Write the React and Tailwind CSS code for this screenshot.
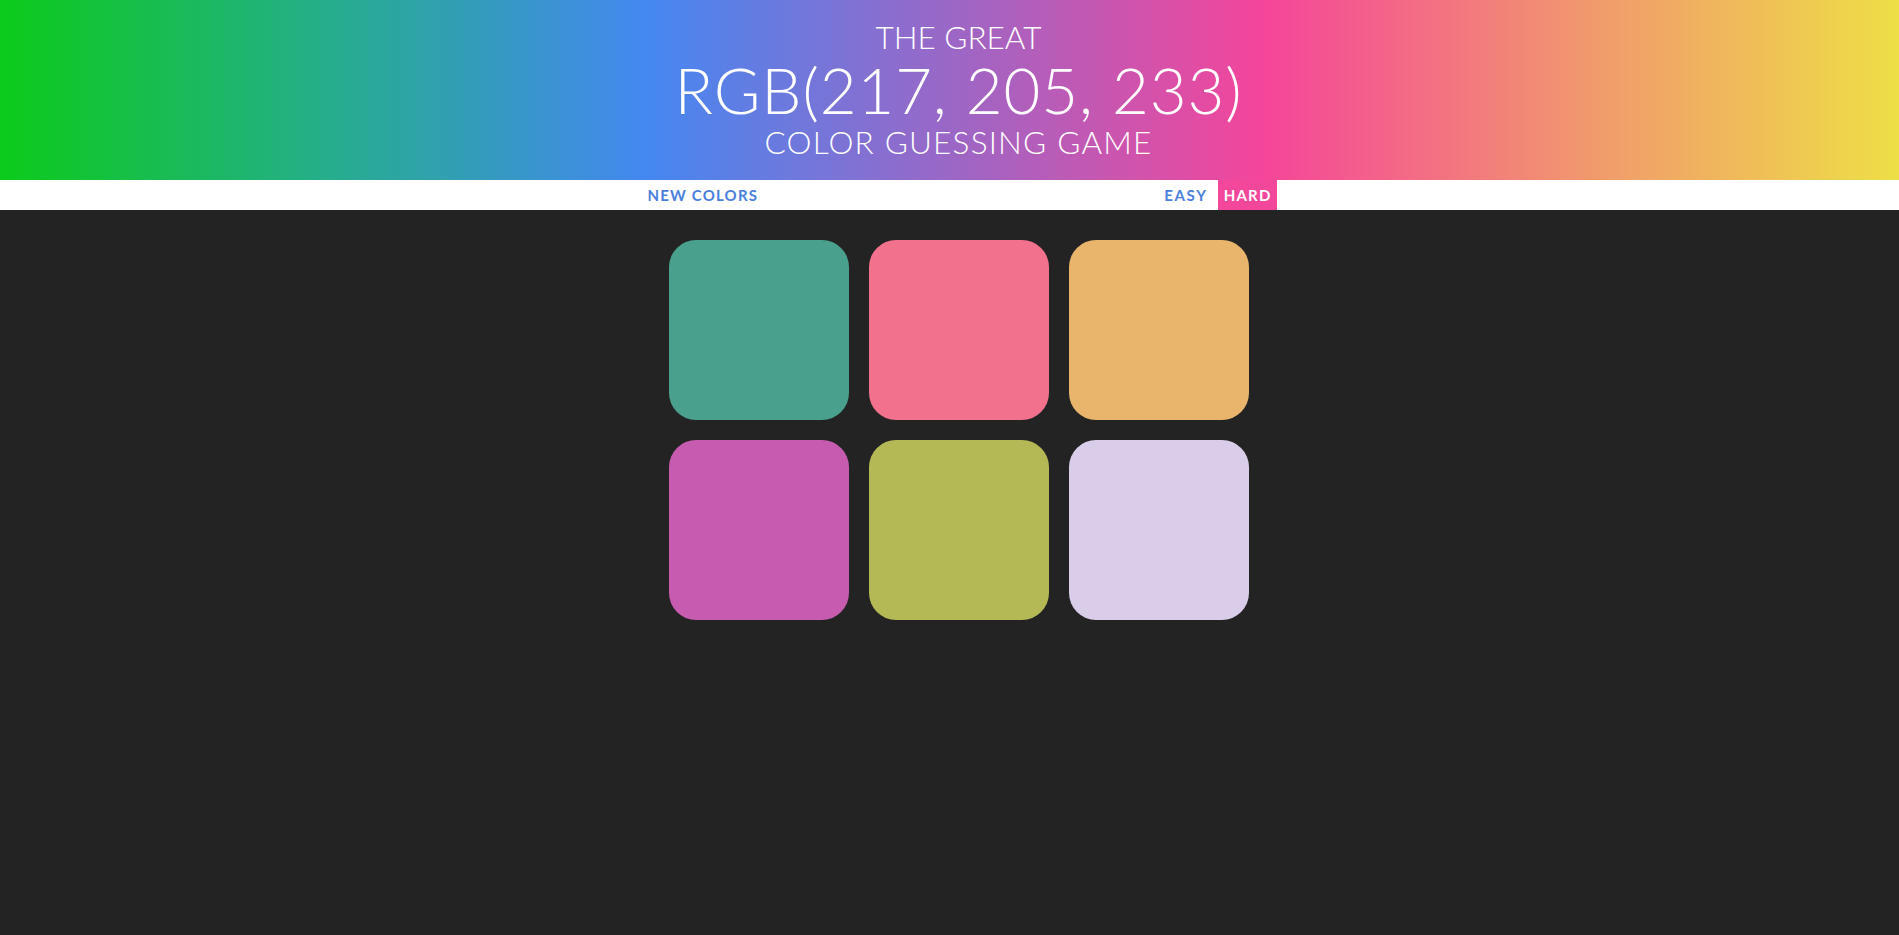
export default function App() {
  const squares = [
    "bg-[rgb(73,160,140)]",
    "bg-[rgb(242,114,142)]",
    "bg-[rgb(233,181,108)]",
    "bg-[rgb(198,91,176)]",
    "bg-[rgb(180,185,85)]",
    "bg-[rgb(217,205,233)]",
  ];
  return (
    <div
      className="min-h-[935px] w-full bg-[#232323] overflow-hidden"
      style={{ fontFamily: "Lato, 'Open Sans', sans-serif" }}
    >
      <header className="h-[180px] bg-[linear-gradient(to_right,#0ccb1a_0%,#25ae8a_17%,#4488f1_34%,#f5459a_66.6%,#f19a6c_84%,#eedf46_100%)] pl-[18px] pt-[21px] text-center text-white font-light uppercase">
        <div className="text-[31.5px] leading-[32px]">The Great</div>
        <div className="mt-[5px] text-[63.5px] leading-[64px] tracking-[0.9px]">RGB(217, 205, 233)</div>
        <div className="mt-[4px] text-[31.5px] leading-[32px] tracking-[1.2px]">Color Guessing Game</div>
      </header>
      <nav className="h-[30px] bg-white pl-[18px]">
        <div className="mx-auto flex h-[30px] w-[636px] items-stretch justify-between text-[15px] font-bold uppercase tracking-[1.2px] leading-[30px]">
          <button className="px-[7px] text-[#4a80dc] uppercase">New Colors</button>
          <div className="flex gap-[4px]">
            <button className="px-[6px] text-[#4a80dc] uppercase tracking-[1.7px]">Easy</button>
            <button className="bg-[#f2479b] pl-[6px] pr-[5px] text-white uppercase">Hard</button>
          </div>
        </div>
      </nav>
      <main className="pl-[18px]">
        <div className="mx-auto mt-[20px] flex w-[600px] flex-wrap">
          {squares.map((c, i) => (
            <div key={i} className={`m-[10px] h-[180px] w-[180px] rounded-[27px] ${c}`} />
          ))}
        </div>
      </main>
    </div>
  );
}
